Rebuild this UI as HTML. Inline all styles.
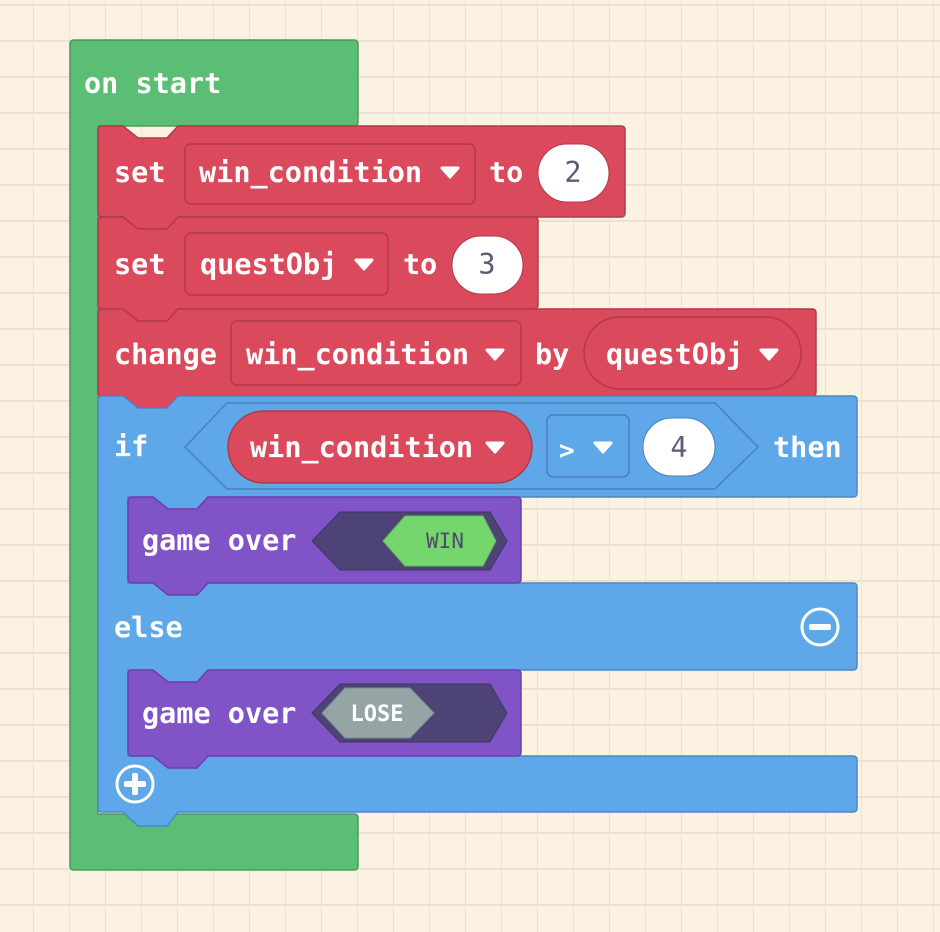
<!DOCTYPE html>
<html><head><meta charset="utf-8"><style>
html,body{margin:0;padding:0;width:940px;height:932px;overflow:hidden;background:#fcf2e2;}
svg{display:block}
text{font-family:"DejaVu Sans Mono","Liberation Mono",monospace;font-size:28.5px;font-weight:bold;fill:#fff;}
</style></head><body>
<svg width="940" height="932" viewBox="0 0 940 932" xmlns="http://www.w3.org/2000/svg">
<defs>
<pattern id="g" x="-2" y="4" width="36" height="36" patternUnits="userSpaceOnUse">
<rect x="35" y="0" width="2" height="36" fill="#ebe1d7"/>
<rect x="0" y="0" width="36" height="2" fill="#ebe1d7"/>
</pattern>
</defs>
<rect width="940" height="932" fill="#fcf2e2"/>
<rect width="940" height="932" fill="url(#g)"/>

<path d="M74,40 H354 Q358,40 358,44 V122 Q358,126 354,126 H98 V814 H354 Q358,814 358,818 V866 Q358,870 354,870 H74 Q70,870 70,866 V44 Q70,40 74,40 Z" fill="#5cbd74" stroke="#4a9a5e" stroke-width="1.5"/>
<text x="84" y="93">on start</text>

<path d="M102,126 H123 L138,138 H167 L178,126 H621 Q625,126 625,130 V213 Q625,217 621,217 H178 L167,229 H138 L123,217 H102 Q98,217 98,213 V130 Q98,126 102,126 Z" fill="#da4a5c" stroke="#b13a4a" stroke-width="1.5"/>
<text x="114" y="182">set</text>
<rect x="185" y="144" width="290" height="60" rx="6" fill="#da4a5c" stroke="#b13a4a" stroke-width="1.5"/>
<text x="199" y="182">win_condition</text>
<path d="M442,168 H458 L450,177 Z" fill="#fff" stroke="#fff" stroke-width="3" stroke-linejoin="round"/>
<text x="489" y="182">to</text>
<rect x="538" y="144" width="71" height="58" rx="29" fill="#fff" stroke="#b13a4a" stroke-width="1"/>
<text x="573" y="182" text-anchor="middle" style="fill:#575e75;font-weight:normal">2</text>

<path d="M102,217 H123 L138,229 H167 L178,217 H534 Q538,217 538,221 V305 Q538,309 534,309 H178 L167,321 H138 L123,309 H102 Q98,309 98,305 V221 Q98,217 102,217 Z" fill="#da4a5c" stroke="#b13a4a" stroke-width="1.5"/>
<text x="114" y="274">set</text>
<rect x="185" y="233" width="203" height="62" rx="6" fill="#da4a5c" stroke="#b13a4a" stroke-width="1.5"/>
<text x="200" y="274">questObj</text>
<path d="M356,260 H372 L364,269 Z" fill="#fff" stroke="#fff" stroke-width="3" stroke-linejoin="round"/>
<text x="403" y="274">to</text>
<rect x="452" y="236" width="71" height="58" rx="29" fill="#fff" stroke="#b13a4a" stroke-width="1"/>
<text x="487" y="274" text-anchor="middle" style="fill:#575e75;font-weight:normal">3</text>

<path d="M102,309 H123 L138,321 H167 L178,309 H812 Q816,309 816,313 V392 Q816,396 812,396 H178 L167,408 H138 L123,396 H102 Q98,396 98,392 V313 Q98,309 102,309 Z" fill="#da4a5c" stroke="#b13a4a" stroke-width="1.5"/>
<text x="114" y="364">change</text>
<rect x="231" y="321" width="290" height="64" rx="6" fill="#da4a5c" stroke="#b13a4a" stroke-width="1.5"/>
<text x="246" y="364">win_condition</text>
<path d="M487,350 H503 L495,359 Z" fill="#fff" stroke="#fff" stroke-width="3" stroke-linejoin="round"/>
<text x="535" y="364">by</text>
<rect x="584" y="317" width="217" height="72" rx="36" fill="#da4a5c" stroke="#b13a4a" stroke-width="1.5"/>
<text x="606" y="364">questObj</text>
<path d="M761,350 H777 L769,359 Z" fill="#fff" stroke="#fff" stroke-width="3" stroke-linejoin="round"/>

<path d="M102,396 H123 L138,408 H167 L178,396 H853 Q857,396 857,400 V493 Q857,497 853,497 H208 L197,509 H168 L153,497 H128 V583 H853 Q857,583 857,587 V666 Q857,670 853,670 H208 L197,682 H168 L153,670 H128 V756 H853 Q857,756 857,760 V808 Q857,812 853,812 H178 L167,826 H138 L123,812 H102 Q98,812 98,808 V400 Q98,396 102,396 Z" fill="#5ea8e9" stroke="#4a88c4" stroke-width="1.5"/>
<text x="114" y="456">if</text>
<path d="M185,447 L227,403 H715 L758,447 L715,489 H227 Z" fill="#5ea8e9" stroke="#4a80b8" stroke-width="1.5"/>
<rect x="228" y="411" width="304" height="72" rx="36" fill="#da4a5c" stroke="#b13a4a" stroke-width="1.5"/>
<text x="250" y="457">win_condition</text>
<path d="M487,443 H503 L495,452 Z" fill="#fff" stroke="#fff" stroke-width="3" stroke-linejoin="round"/>
<rect x="547" y="415" width="82" height="62" rx="6" fill="#5ea8e9" stroke="#4a80b8" stroke-width="1.5"/>
<text x="559" y="459" style="font-size:26px">&gt;</text>
<path d="M595,443 H611 L603,452 Z" fill="#fff" stroke="#fff" stroke-width="3" stroke-linejoin="round"/>
<rect x="643" y="418" width="72" height="58" rx="29" fill="#fff" stroke="#4a80b8" stroke-width="1"/>
<text x="679" y="457" text-anchor="middle" style="fill:#575e75;font-weight:normal">4</text>
<text x="773" y="457">then</text>

<path d="M132,497 H153 L168,509 H197 L208,497 H517 Q521,497 521,501 V579 Q521,583 517,583 H208 L197,595 H168 L153,583 H132 Q128,583 128,579 V501 Q128,497 132,497 Z" fill="#8053c7" stroke="#6a3fab" stroke-width="1.5"/>
<text x="142" y="550">game over</text>
<path d="M312,541 L340,512 H490 L507,541 L490,570 H340 Z" fill="#4e4377" stroke="#3f3566" stroke-width="1"/>
<path d="M383,541 L405,516 H483 L496,541 L483,566 H405 Z" fill="#76d66e" stroke="#5fb858" stroke-width="1"/>
<text x="445" y="548" text-anchor="middle" style="font-size:21px;fill:#4e4a6a;font-weight:normal">WIN</text>

<text x="114" y="637">else</text>
<circle cx="820" cy="627" r="18" fill="none" stroke="#fff" stroke-width="3"/>
<rect x="809" y="624" width="22" height="6" rx="2" fill="#fff"/>

<path d="M132,670 H153 L168,682 H197 L208,670 H517 Q521,670 521,674 V752 Q521,756 517,756 H208 L197,768 H168 L153,756 H132 Q128,756 128,752 V674 Q128,670 132,670 Z" fill="#8053c7" stroke="#6a3fab" stroke-width="1.5"/>
<text x="142" y="723">game over</text>
<path d="M312,713 L340,684 H490 L507,713 L490,742 H340 Z" fill="#4e4377" stroke="#3f3566" stroke-width="1"/>
<path d="M322,713 L345,688 H410 L434,713 L410,738 H345 Z" fill="#95a5a6" stroke="#7f8c8d" stroke-width="1"/>
<text x="377" y="721" text-anchor="middle" style="font-size:22px">LOSE</text>

<circle cx="135" cy="784" r="18" fill="none" stroke="#fff" stroke-width="3"/>
<rect x="124" y="781" width="22" height="6" rx="2" fill="#fff"/>
<rect x="132" y="773" width="6" height="22" rx="2" fill="#fff"/>
</svg>
</body></html>
